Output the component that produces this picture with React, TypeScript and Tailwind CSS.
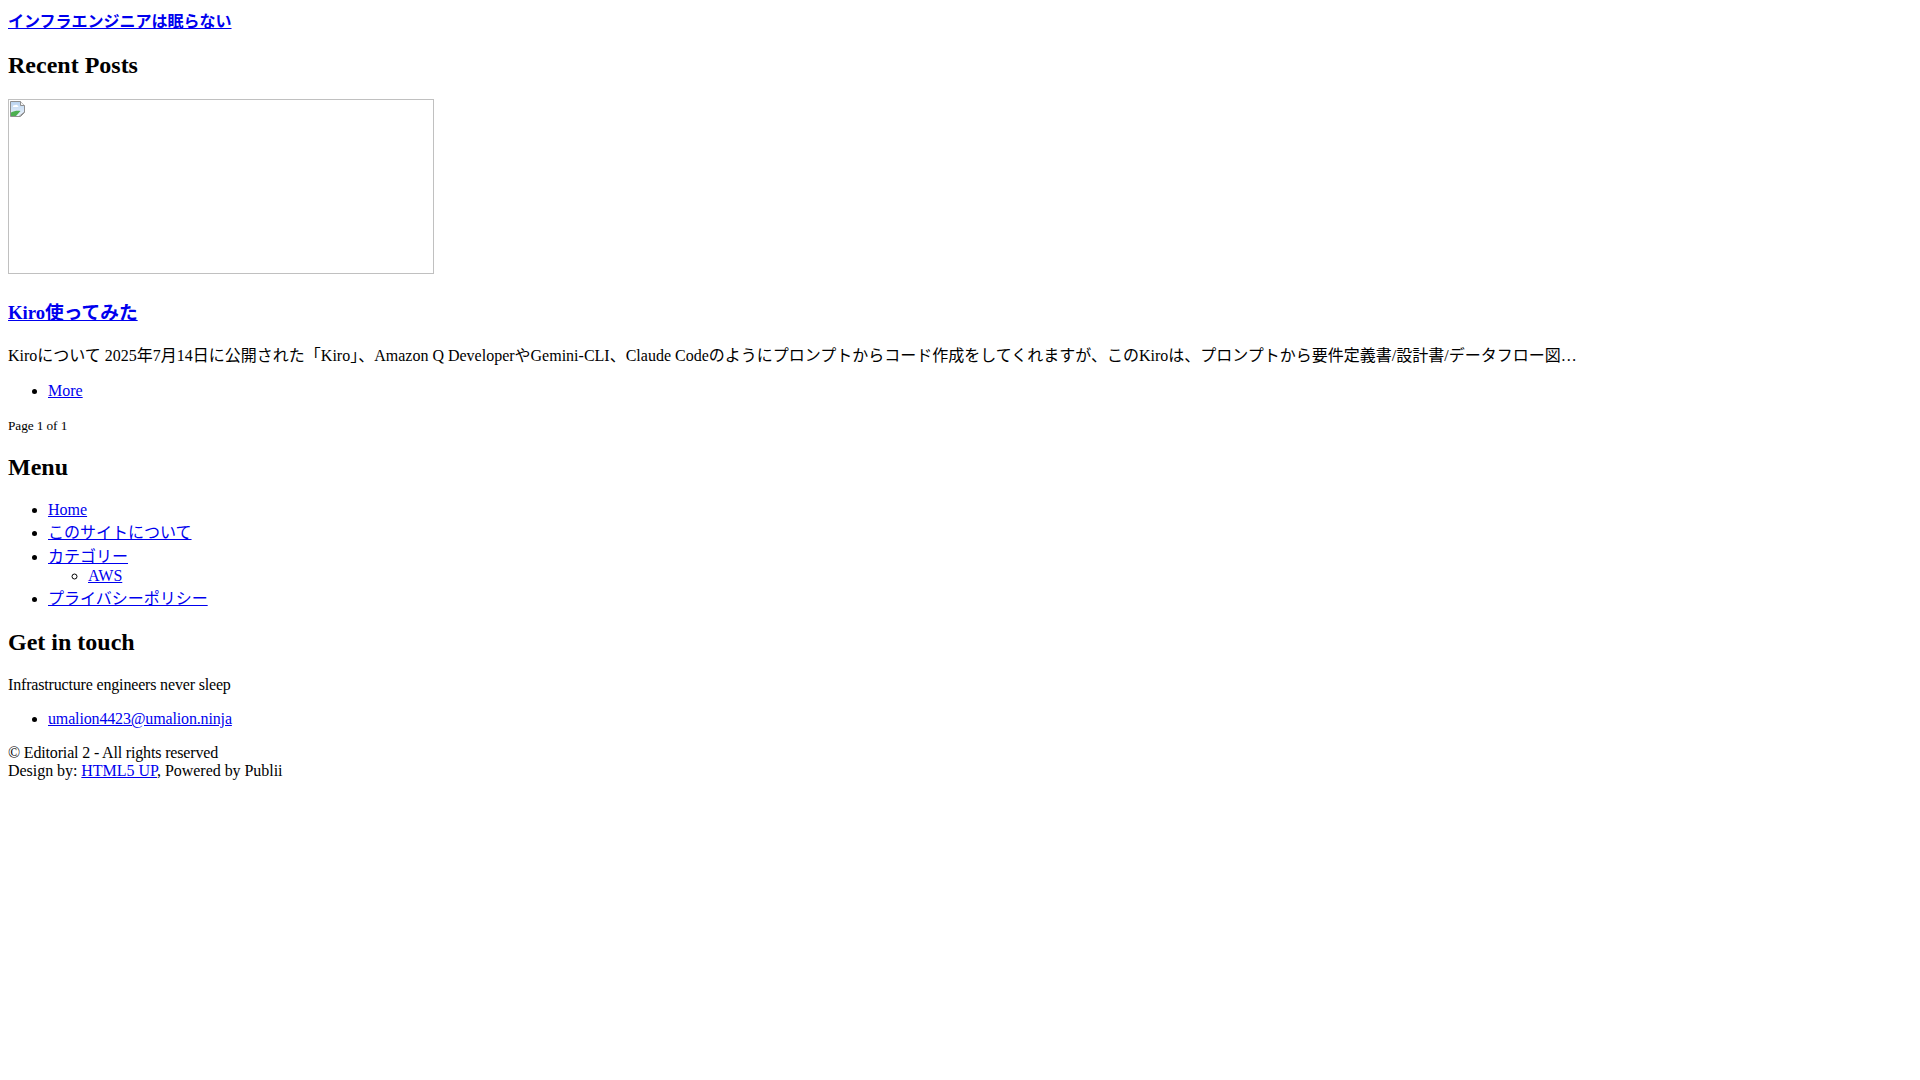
import React from "react";

const linkCls = "text-[#0000ee] underline";

const BrokenImage: React.FC = () => (
  <span className="inline-block w-[426px] h-[175px] border border-[#c0c0c0] align-baseline">
    <svg width="16" height="16" viewBox="0 0 16 16" className="block ml-px mt-px">
      <defs>
        <linearGradient id="sky" x1="0" y1="0" x2="0" y2="1">
          <stop offset="0" stopColor="#b9d3f0" />
          <stop offset="1" stopColor="#eef5fd" />
        </linearGradient>
      </defs>
      <path d="M0.5 0.5h10l4 4v7l-4 4h-10z" fill="url(#sky)" stroke="#8f8f8f" />
      <path d="M10.5 0.5v4h4" fill="#f4f4f4" stroke="#8f8f8f" />
      <path d="M3 5.5c0-1 1-1.6 2-1.2 0.5-0.9 2-0.9 2.4 0.2 1 0 1.4 1 0.6 1.5h-4.8c-0.3 0-0.2-0.3-0.2-0.5z" fill="#ffffff" />
      <path d="M1 15v-3.5c3-1.5 6-2 9.5-1.5l-4.5 5z" fill="#4caf50" />
      <path d="M9 15.5l5.5-4.5" stroke="#8f8f8f" />
    </svg>
  </span>
);

export default function App() {
  return (
    <div className="m-2 text-[16px] leading-[normal] text-black font-['Liberation_Serif','Noto_Sans_CJK_JP',serif]">
      <header>
        <a href="#" className={linkCls}>
          <strong className="font-bold">インフラエンジニアは眠らない</strong>
        </a>
      </header>

      <section>
        <header>
          <h2 className="text-[24px] font-bold my-[19.92px]">Recent Posts</h2>
        </header>
        <div>
          <article>
            <a href="#">
              <BrokenImage />
            </a>
            <h3 className="text-[18.72px] font-bold my-[18.72px]">
              <a href="#" className={linkCls}>
                Kiro使ってみた
              </a>
            </h3>
            <p className="my-4">
              Kiroについて 2025年7月14日に公開された「Kiro」、Amazon Q DeveloperやGemini-CLI、Claude Codeのようにプロンプトからコード作成をしてくれますが、このKiroは、プロンプトから要件定義書/設計書/データフロー図…
            </p>
            <ul className="list-disc pl-10 my-4">
              <li>
                <a href="#" className={linkCls}>
                  More
                </a>
              </li>
            </ul>
          </article>
        </div>
        <div>
          <small className="text-[13.33px] tracking-[-0.1px]">Page 1 of 1</small>
        </div>
      </section>

      <nav>
        <header>
          <h2 className="text-[24px] font-bold my-[19.92px]">Menu</h2>
        </header>
        <ul className="list-disc pl-10 my-4">
          <li>
            <a href="#" className={linkCls}>Home</a>
          </li>
          <li>
            <a href="#" className={linkCls}>このサイトについて</a>
          </li>
          <li>
            <a href="#" className={linkCls}>カテゴリー</a>
            <ul className="list-[circle] pl-10 my-0">
              <li>
                <a href="#" className={linkCls}>AWS</a>
              </li>
            </ul>
          </li>
          <li>
            <a href="#" className={linkCls}>プライバシーポリシー</a>
          </li>
        </ul>
      </nav>

      <section>
        <header>
          <h2 className="text-[24px] font-bold my-[19.92px]">Get in touch</h2>
        </header>
        <p className="my-4 tracking-[-0.17px]">Infrastructure engineers never sleep</p>
        <ul className="list-disc pl-10 my-4">
          <li>
            <a href="#" className={`${linkCls} tracking-[-0.15px]`}>umalion4423@umalion.ninja</a>
          </li>
        </ul>
      </section>

      <footer>
        <p className="my-4">
          <span className="tracking-[-0.16px]">© Editorial 2 - All rights reserved</span>
          <br />
          <span className="tracking-[-0.04px]">
            Design by:{" "}
            <a href="#" className={linkCls}>HTML5 UP</a>, Powered by Publii
          </span>
        </p>
      </footer>
    </div>
  );
}
